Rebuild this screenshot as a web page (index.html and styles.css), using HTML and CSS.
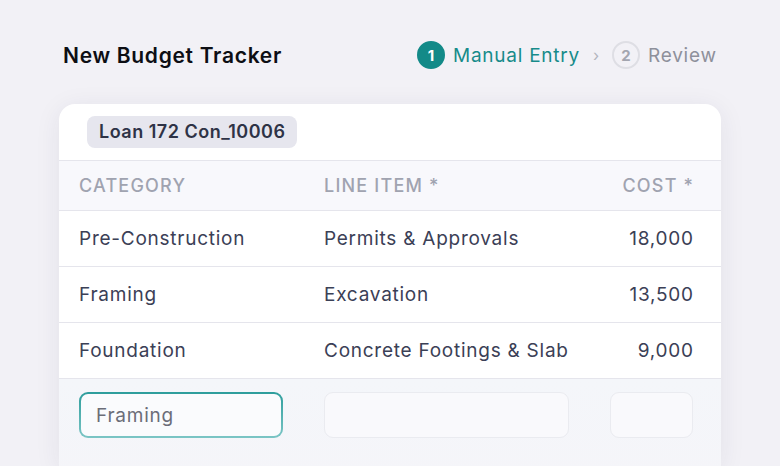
FILE: index.html
```html
<!DOCTYPE html>
<html lang="en">
<head>
<meta charset="utf-8">
<title>New Budget Tracker</title>
<link rel="stylesheet" href="styles.css">
</head>
<body>
<div class="page">
  <header class="topbar">
    <h1 class="title">New Budget Tracker</h1>
    <nav class="stepper">
      <span class="step-num active">1</span>
      <span class="step-label active">Manual Entry</span>
      <span class="chev">›</span>
      <span class="step-num">2</span>
      <span class="step-label">Review</span>
    </nav>
  </header>
  <section class="card">
    <div class="card-head">
      <span class="tag">Loan 172 Con_10006</span>
    </div>
    <div class="row head">
      <div>Category</div>
      <div>Line Item *</div>
      <div class="num">Cost *</div>
    </div>
    <div class="row">
      <div>Pre-Construction</div>
      <div>Permits &amp; Approvals</div>
      <div class="num">18,000</div>
    </div>
    <div class="row">
      <div>Framing</div>
      <div>Excavation</div>
      <div class="num">13,500</div>
    </div>
    <div class="row">
      <div>Foundation</div>
      <div>Concrete Footings &amp; Slab</div>
      <div class="num">9,000</div>
    </div>
    <div class="row entry">
      <div class="input focus">Framing</div>
      <div class="input"></div>
      <div class="input"></div>
    </div>
  </section>
</div>
</body>
</html>
```
FILE: styles.css
```css
* { box-sizing: border-box; }
html, body { margin: 0; padding: 0; }
body {
  background: #f2f1f6;
  font-family: Inter, "Noto Sans", "Liberation Sans", sans-serif;
  width: 780px;
  height: 466px;
  overflow: hidden;
}
.page { padding: 36px 59px 0; }
.topbar {
  display: flex;
  align-items: center;
  justify-content: space-between;
  height: 38px;
  padding: 0 5px 0 4px;
}
.title {
  margin: 0;
  font-size: 21px;
  font-weight: 600;
  color: #0d0e14;
  letter-spacing: 0.7px;
}
.stepper {
  display: flex;
  align-items: center;
}
.step-num {
  width: 28px;
  height: 28px;
  border-radius: 50%;
  border: 2px solid #dedee4;
  color: #a3a5af;
  font-size: 15px;
  font-weight: 700;
  display: flex;
  align-items: center;
  justify-content: center;
}
.step-num.active {
  background: #138a88;
  border-color: #138a88;
  color: #fff;
}
.step-label {
  margin-left: 8px;
  font-size: 19px;
  letter-spacing: 0.75px;
  color: #8e909b;
}
.step-label:last-child { margin-right: -0.75px; }
.step-label.active { color: #178b8a; }
.chev {
  margin: 0 13px;
  color: #b3b5be;
  font-size: 16px;
  line-height: 1;
}
.card {
  margin-top: 30px;
  background: #fff;
  border-radius: 16px 16px 0 0;
  box-shadow: 0 4px 26px rgba(40, 40, 80, 0.08);
  height: 362px;
  overflow: hidden;
}
.card-head {
  padding: 12px 28px 12px 28px;
  border-bottom: 1px solid #e5e5ec;
}
.tag {
  display: inline-block;
  background: #e6e6ee;
  color: #2e3346;
  font-weight: 600;
  font-size: 18px;
  letter-spacing: 0.5px;
  line-height: 32px;
  height: 32px;
  padding: 0 12px;
  border-radius: 8px;
}
.row {
  display: grid;
  grid-template-columns: 204px 245px 83px;
  column-gap: 41px;
  align-items: center;
  height: 56px;
  padding: 0 28px 0 20px;
  border-bottom: 1px solid #e5e5ec;
  font-size: 19px;
  letter-spacing: 0.75px;
  color: #3b4056;
}
.row.head {
  height: 50px;
  background: #f8f8fc;
  font-size: 18px;
  font-weight: 500;
  letter-spacing: 1.2px;
  text-transform: uppercase;
  color: #a0a3b0;
}
.row > div { white-space: nowrap; }
.num { text-align: right; margin-right: -0.75px; }
.row.head .num { margin-right: -1.2px; }
.row.entry {
  height: auto;
  border-bottom: none;
  align-items: start;
  padding-top: 13px;
  padding-bottom: 40px;
  background: linear-gradient(#f4f6fa, #f5f5f9);
}
.input {
  height: 46px;
  border-radius: 9px;
  border: 1.5px solid #eaebf0;
  background: #f9f9fc;
}
.input.focus {
  border: 2px solid transparent;
  background:
    linear-gradient(#fafbfd, #fafbfd) padding-box,
    linear-gradient(#2d9d9c, #7bc5c5) border-box;
  display: flex;
  align-items: center;
  padding-left: 15px;
  font-size: 19px;
  letter-spacing: 0.75px;
  color: #6b6d78;
}
```
